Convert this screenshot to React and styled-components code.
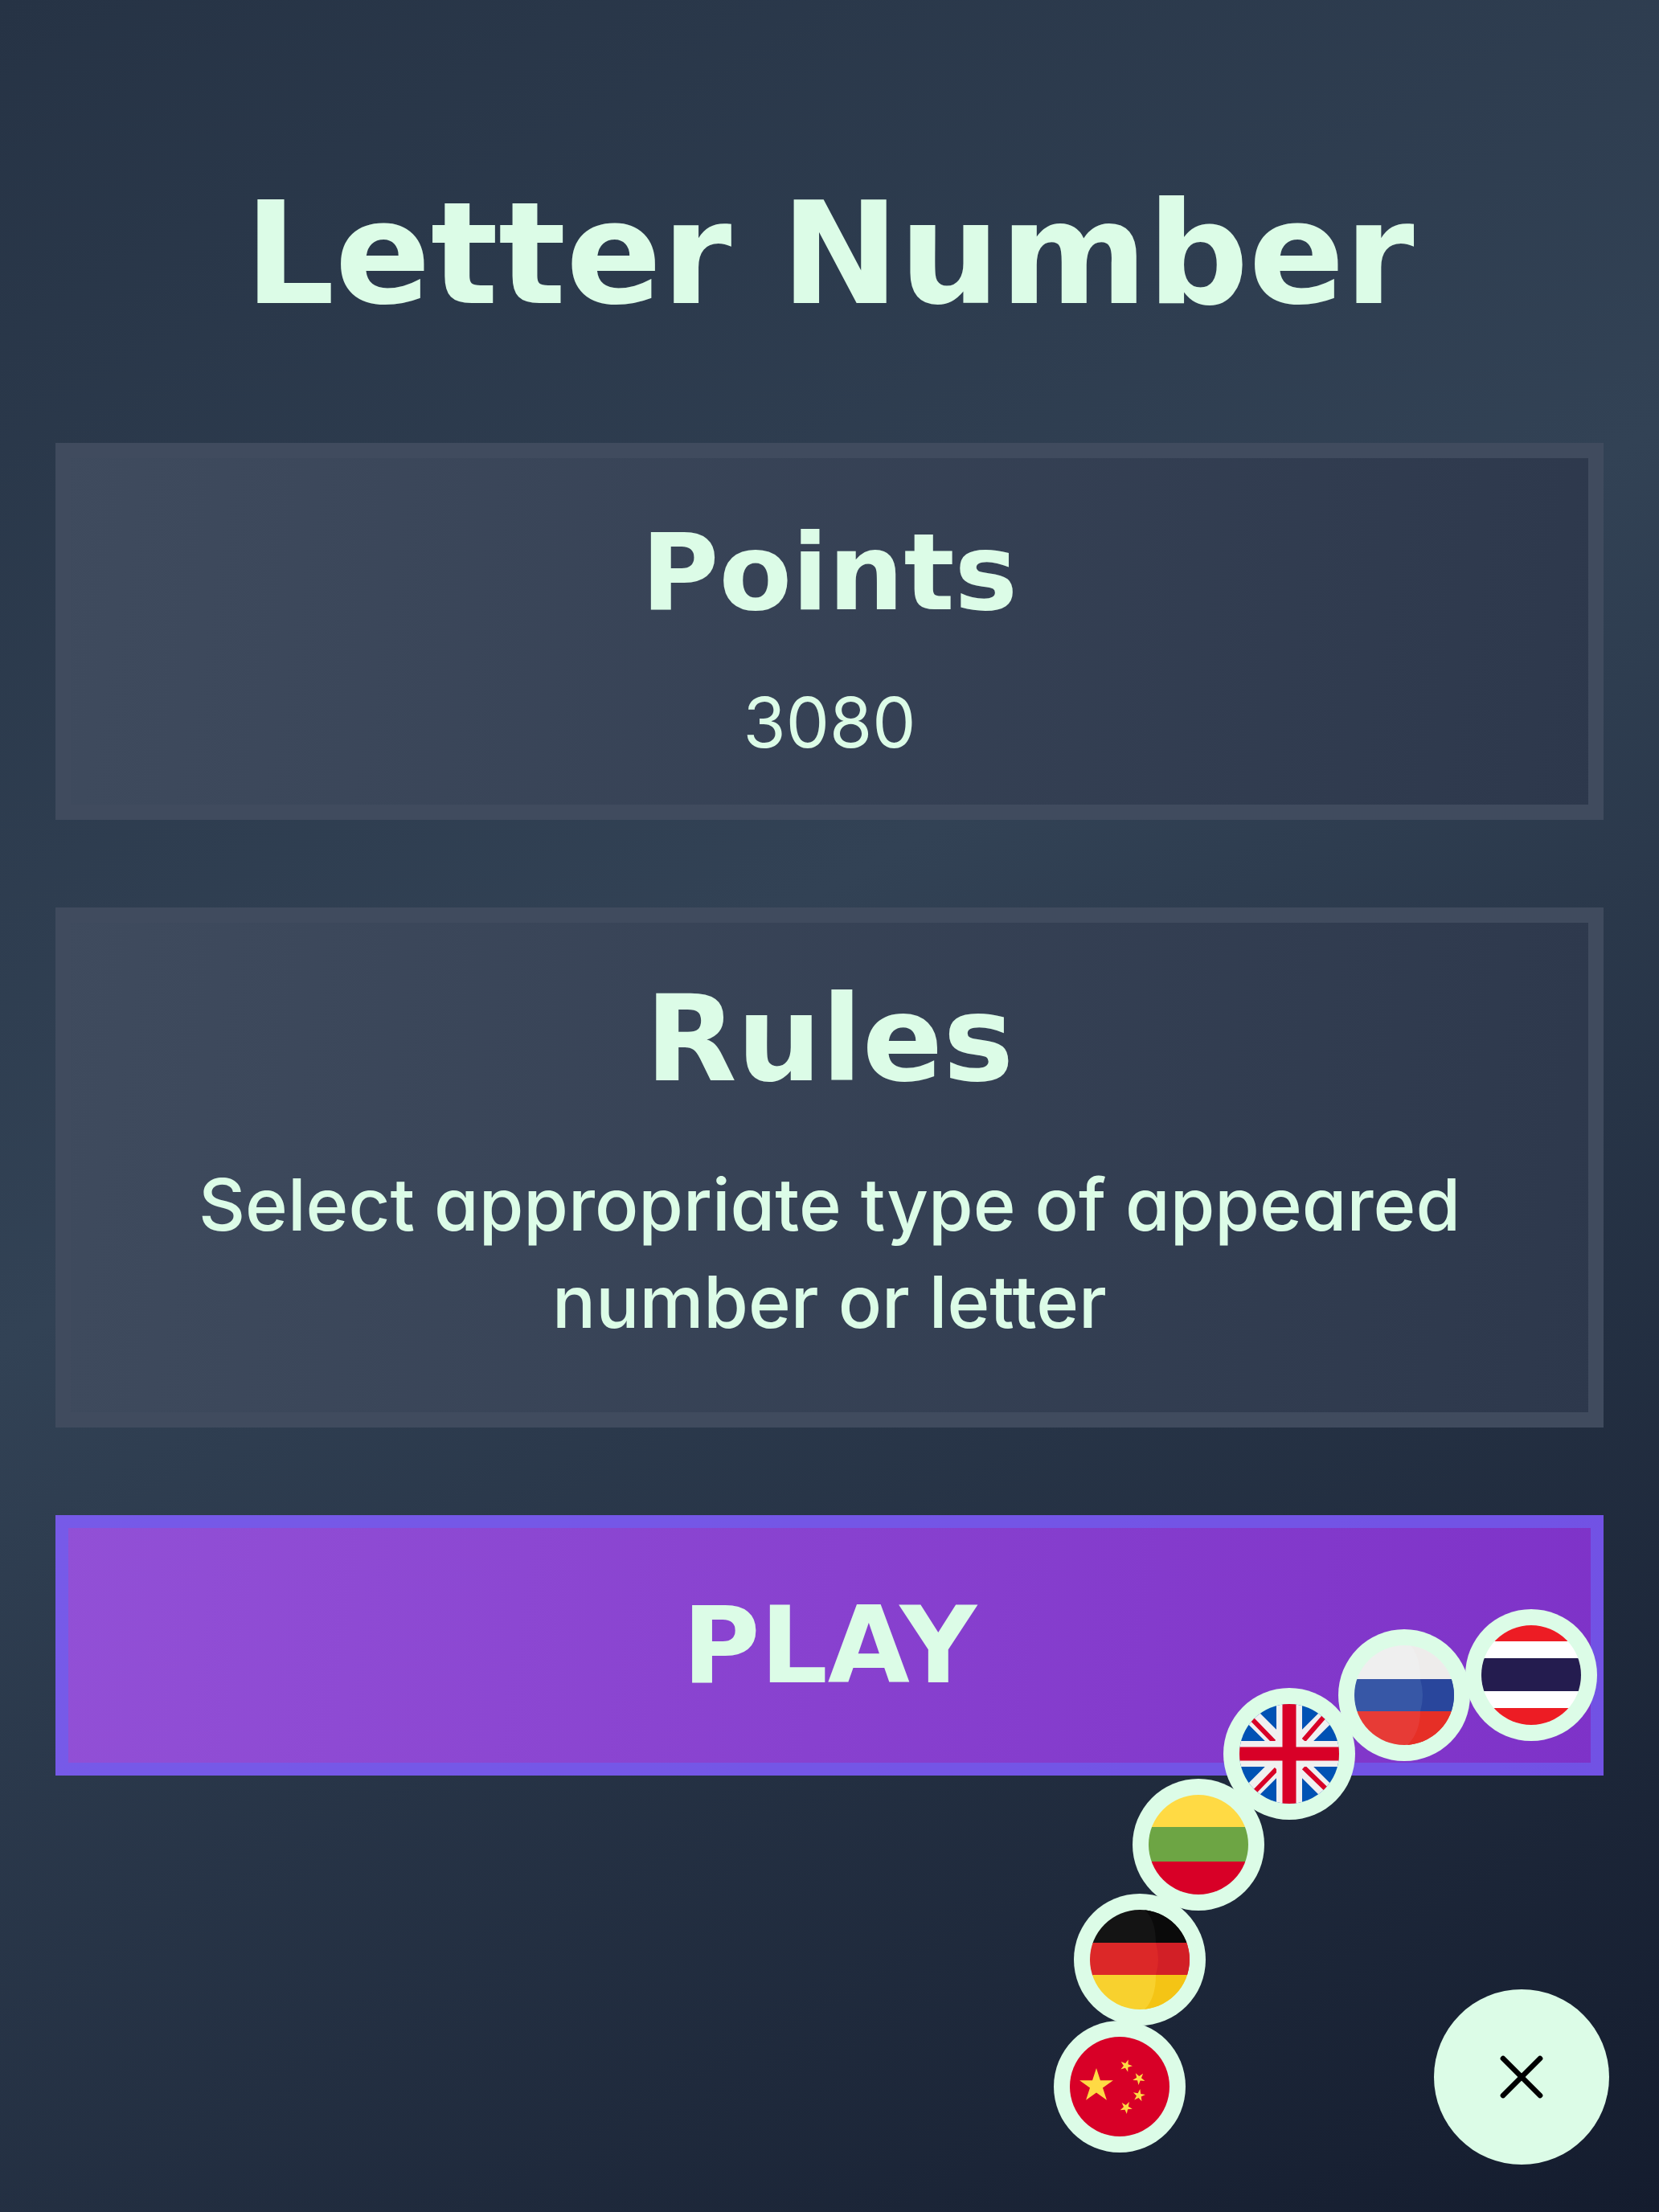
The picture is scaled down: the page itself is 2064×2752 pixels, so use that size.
import React, { useState } from "react";
import { X } from "lucide-react";
import styled, { createGlobalStyle } from "styled-components";

const languages = [
  { code: "zh", label: "中文", x: -500, y: 12 },
  { code: "de", label: "Deutsch", x: -475, y: -146 },
  { code: "lt", label: "Lietuvių", x: -402, y: -289 },
  { code: "en", label: "English", x: -289, y: -402 },
  { code: "ru", label: "Русский", x: -146, y: -475 },
  { code: "th", label: "ไทย", x: 12, y: -500 },
];

const star = (cx, cy, r, turn = 0) =>
  Array.from({ length: 10 }, (_, i) => {
    const radius = i % 2 ? r * 0.382 : r;
    const a = ((i * 36 - 90 + turn) * Math.PI) / 180;
    return `${cx + radius * Math.cos(a)},${cy + radius * Math.sin(a)}`;
  }).join(" ");

const flags = {
  zh: (
    <>
      <rect width="124" height="124" fill="#d80027" />
      <g fill="#ffda44">
        <polygon points={star(33, 61, 22)} />
        <polygon points={star(70, 36, 8, 20)} />
        <polygon points={star(86, 52, 8, 40)} />
        <polygon points={star(86, 73, 8, 10)} />
        <polygon points={star(70, 88, 8, 30)} />
      </g>
    </>
  ),
  de: (
    <>
      <rect width="124" height="42" fill="#141414" />
      <rect y="41" width="124" height="41" fill="#dc2828" />
      <rect y="81" width="124" height="43" fill="#f8d12e" />
      <path d="M68 0Q82 12 82 41H124V0Z" fill="#0a0a0a" />
      <path d="M82 41Q88 62 82 81H124V41Z" fill="#d21f26" />
      <path d="M82 81Q82 110 68 124H124V81Z" fill="#f4c415" />
    </>
  ),
  lt: (
    <>
      <rect width="124" height="41" fill="#ffda44" />
      <rect y="40" width="124" height="43" fill="#6da544" />
      <rect y="83" width="124" height="41" fill="#d80027" />
    </>
  ),
  en: (
    <>
      <rect width="124" height="124" fill="#0052b4" />
      <path d="M0 0L124 124M124 0L0 124" stroke="#f0f0f0" strokeWidth="20" />
      <path
        d="M12 15L43 47M80 45L106 15M18 110L46 81M80 79L110 108"
        stroke="#d80027"
        strokeWidth="6"
      />
      <path d="M62 0V124M0 62H124" stroke="#f0f0f0" strokeWidth="32" />
      <path d="M62 0V124M0 62H124" stroke="#d80027" strokeWidth="17" />
    </>
  ),
  ru: (
    <>
      <rect width="124" height="42" fill="#efefef" />
      <rect y="42" width="124" height="40" fill="#3757a6" />
      <rect y="82" width="124" height="42" fill="#e73b36" />
      <path d="M70 0Q82 14 82 42H124V0Z" fill="#eeeceb" />
      <path d="M82 42Q88 62 82 82H124V42Z" fill="#29469c" />
      <path d="M82 82Q82 108 66 124H124V82Z" fill="#e62f26" />
    </>
  ),
  th: (
    <>
      <rect width="124" height="124" fill="#fff" />
      <rect width="124" height="20" fill="#ed1c24" />
      <rect y="41" width="124" height="41" fill="#241c4f" />
      <rect y="103" width="124" height="21" fill="#ed1c24" />
    </>
  ),
};

const App = () => {
  const [open, setOpen] = useState(true);
  const [language, setLanguage] = useState("en");

  return (
    <>
      <GlobalStyle />
      <Page lang={language}>
        <Title>Letter Number</Title>
        <Card>
          <Heading>Points</Heading>
          <Text>3080</Text>
        </Card>
        <Card $spacious>
          <Heading $large>Rules</Heading>
          <Text $strong>
            Select appropriate type of appeared number or letter
          </Text>
        </Card>
        <PlayButton type="button">PLAY</PlayButton>
      </Page>
      <LanguageMenu>
        {open &&
          languages.map(({ code, label, x, y }) => (
            <FlagButton
              key={code}
              type="button"
              aria-label={label}
              $x={x}
              $y={y}
              onClick={() => setLanguage(code)}
            >
              <Flag viewBox="0 0 124 124" aria-hidden="true">
                {flags[code]}
              </Flag>
            </FlagButton>
          ))}
        <ToggleButton
          type="button"
          aria-label="Close language menu"
          onClick={() => setOpen(!open)}
        >
          <X size={92} strokeWidth={1.75} />
        </ToggleButton>
      </LanguageMenu>
    </>
  );
};

export default App;

const GlobalStyle = createGlobalStyle`
  * {
    box-sizing: border-box;
  }
  body {
    margin: 0;
    color: #dcfce7;
    font-family: Inter, "Open Sans", sans-serif;
  }
  h1, h2, p {
    margin: 0;
  }
  button {
    padding: 0;
    cursor: pointer;
  }
`;

const Page = styled.main`
  min-height: 100vh;
  display: flex;
  flex-direction: column;
  gap: 109px;
  padding: 192px 69px 109px;
  text-align: center;
  background: linear-gradient(151deg, #263345 0%, #324255 43%, #141c2e 100%);
`;
const Title = styled.h1`
  font-family: "DejaVu Sans", sans-serif;
  font-size: 176px;
  line-height: 250px;
  font-weight: 700;
`;
const Card = styled.section`
  display: flex;
  flex-direction: column;
  gap: ${(props) => (props.$spacious ? "62px" : "47px")};
  padding: ${(props) => (props.$spacious ? "62px 80px 77px" : "62px 80px 41px")};
  border: 19px solid #404b5e;
  background: linear-gradient(100deg, #3f4b5e, #2d384c) border-box;
`;
const Heading = styled.h2`
  font-family: "DejaVu Sans", sans-serif;
  font-size: ${(props) => (props.$large ? "148px" : "132px")};
  line-height: ${(props) => (props.$large ? "166px" : "160px")};
  font-weight: 700;
`;
const Text = styled.p`
  font-size: ${(props) => (props.$strong ? "90px" : "86px")};
  line-height: 121px;
  font-weight: ${(props) => (props.$strong ? 500 : 400)};
  font-optical-sizing: none;
  font-feature-settings: "cv11";
`;
const PlayButton = styled.button`
  height: 324px;
  border: 16px solid rgba(109, 93, 237, 0.75);
  background: linear-gradient(100deg, #9250d6, #7e32c8) border-box;
  color: inherit;
  font-family: "DejaVu Sans", sans-serif;
  font-size: 132px;
  font-weight: 700;
`;
const LanguageMenu = styled.nav`
  position: fixed;
  right: 62px;
  bottom: 59px;
  width: 218px;
  height: 218px;
`;
const ToggleButton = styled.button`
  width: 100%;
  height: 100%;
  display: flex;
  align-items: center;
  justify-content: center;
  border: none;
  border-radius: 50%;
  background: #dcfce7;
  color: #000;
`;
const FlagButton = styled.button`
  position: absolute;
  left: calc(50% - 82px + ${(props) => props.$x}px);
  top: calc(50% - 82px + ${(props) => props.$y}px);
  width: 164px;
  height: 164px;
  border: none;
  border-radius: 50%;
  padding: 20px;
  background: #dcfce7;
`;
const Flag = styled.svg`
  display: block;
  width: 100%;
  height: 100%;
  border-radius: 50%;
`;
